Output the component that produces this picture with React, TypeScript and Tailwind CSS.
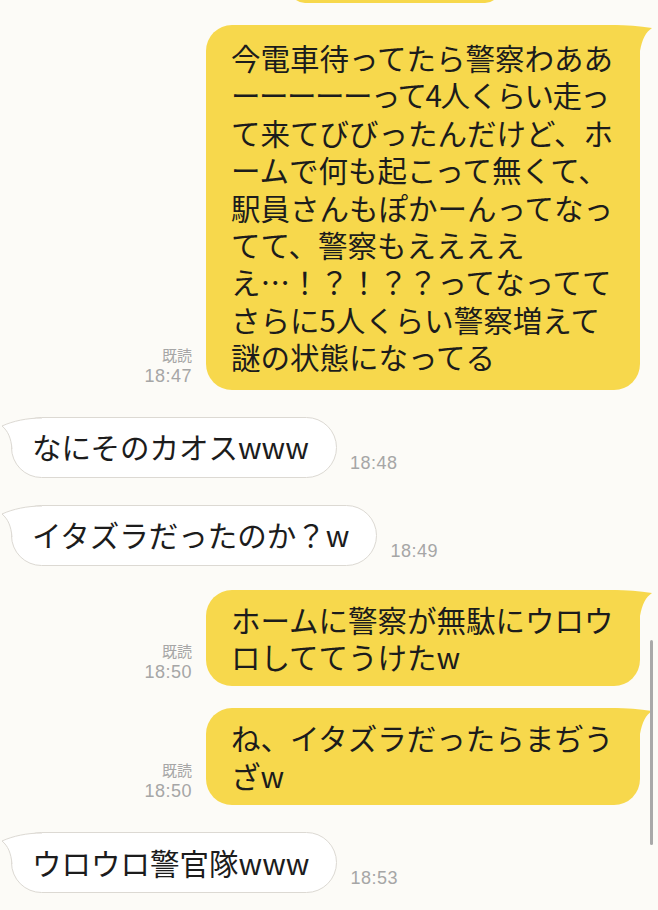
import React from 'react';

const YELLOW = '#f7d84c';

const YellowTail = () => (
  <svg className="absolute -right-[13px] top-0" width="40" height="28" viewBox="0 0 40 28">
    <path d="M0 0 C14 0 26 1 39 3 C33 7 29 14 27 26 L0 26 Z" fill={YELLOW} />
  </svg>
);

const WhiteTail = () => (
  <svg className="absolute -left-[11px] -top-[1px]" width="44" height="34" viewBox="0 0 44 34">
    <path d="M41 1 C26 1 12 4 1 9 C7 14 10 21 11 32 L41 32 Z" fill="#ffffff" />
    <path d="M41 1 C26 1 12 4 1 9 C7 14 10 21 11 32" fill="none" stroke="#dcd9d3" strokeWidth="1" />
  </svg>
);

const ReadMeta = ({ time }: { time: string }) => (
  <div className="flex flex-col items-end mb-[3px] text-[#a6a6a6]">
    <span className="text-[15px] leading-[20px] font-['Noto_Sans_CJK_JP',sans-serif]">既読</span>
    <span className="text-[18px] leading-[22px] tracking-[0.5px] font-['Liberation_Sans',sans-serif]">{time}</span>
  </div>
);

const MineBubble = ({ lines, time, pad, mt }: { lines: React.ReactNode[]; time: string; pad: string; mt: string }) => (
  <div className={`flex justify-end items-end gap-[14px] pr-[18px] ${mt}`}>
    <ReadMeta time={time} />
    <div className={`relative w-[434px] rounded-[26px] pl-[25px] ${pad}`} style={{ backgroundColor: YELLOW }}>
      <YellowTail />
      <div className="relative whitespace-nowrap text-[29.5px] leading-[37.4px] text-[#1c1c1c]">
        {lines.map((l, i) => (
          <div key={i}>{l}</div>
        ))}
      </div>
    </div>
  </div>
);

const TheirBubble = ({ text, time, mt }: { text: string; time: string; mt: string }) => (
  <div className={`flex items-end pl-[11px] ${mt}`}>
    <div className="relative h-[61px] flex items-center rounded-full border border-[#dcd9d3] bg-white pl-[20px] pr-[27px]">
      <WhiteTail />
      <span className="relative whitespace-nowrap text-[29.5px] leading-[37.4px] text-[#1c1c1c]">{text}</span>
    </div>
    <span className="ml-[13px] mb-[4px] text-[18px] leading-[22px] tracking-[0.5px] text-[#a6a6a6] font-['Liberation_Sans',sans-serif]">
      {time}
    </span>
  </div>
);

export default function App() {
  return (
    <div className="relative w-[658px] h-[910px] overflow-hidden bg-[#fcfbf7] font-['Noto_Sans_CJK_JP',sans-serif]">
      {/* end of previous message */}
      <div className="-mt-[27px] ml-[290px] w-[210px] h-[30px] rounded-[22px]" style={{ backgroundColor: YELLOW }} />

      <MineBubble
        mt="mt-[22px]"
        pad="py-[14px]"
        time="18:47"
        lines={[
          '今電車待ってたら警察わああ',
          <span className="tracking-[-1.5px]">ーーーーーって4人くらい走っ</span>,
          'て来てびびったんだけど、ホ',
          'ームで何も起こって無くて、',
          '駅員さんもぽかーんってなっ',
          'てて、警察もええええ',
          'え…！？！？？ってなってて',
          'さらに5人くらい警察増えて',
          '謎の状態になってる',
        ]}
      />

      <TheirBubble mt="mt-[27px]" text="なにそのカオスwww" time="18:48" />
      <TheirBubble mt="mt-[27px]" text="イタズラだったのか？w" time="18:49" />

      <MineBubble mt="mt-[24px]" pad="py-[11px]" time="18:50" lines={['ホームに警察が無駄にウロウ', 'ロしててうけたw']} />
      <MineBubble mt="mt-[22px]" pad="py-[11px]" time="18:50" lines={['ね、イタズラだったらまぢう', 'ざw']} />

      <TheirBubble mt="mt-[27px]" text="ウロウロ警官隊www" time="18:53" />

      {/* scroll indicator */}
      <div className="absolute left-[650px] top-[640px] w-[3px] h-[205px] rounded-full bg-[#a9a9a9]" />
    </div>
  );
}
